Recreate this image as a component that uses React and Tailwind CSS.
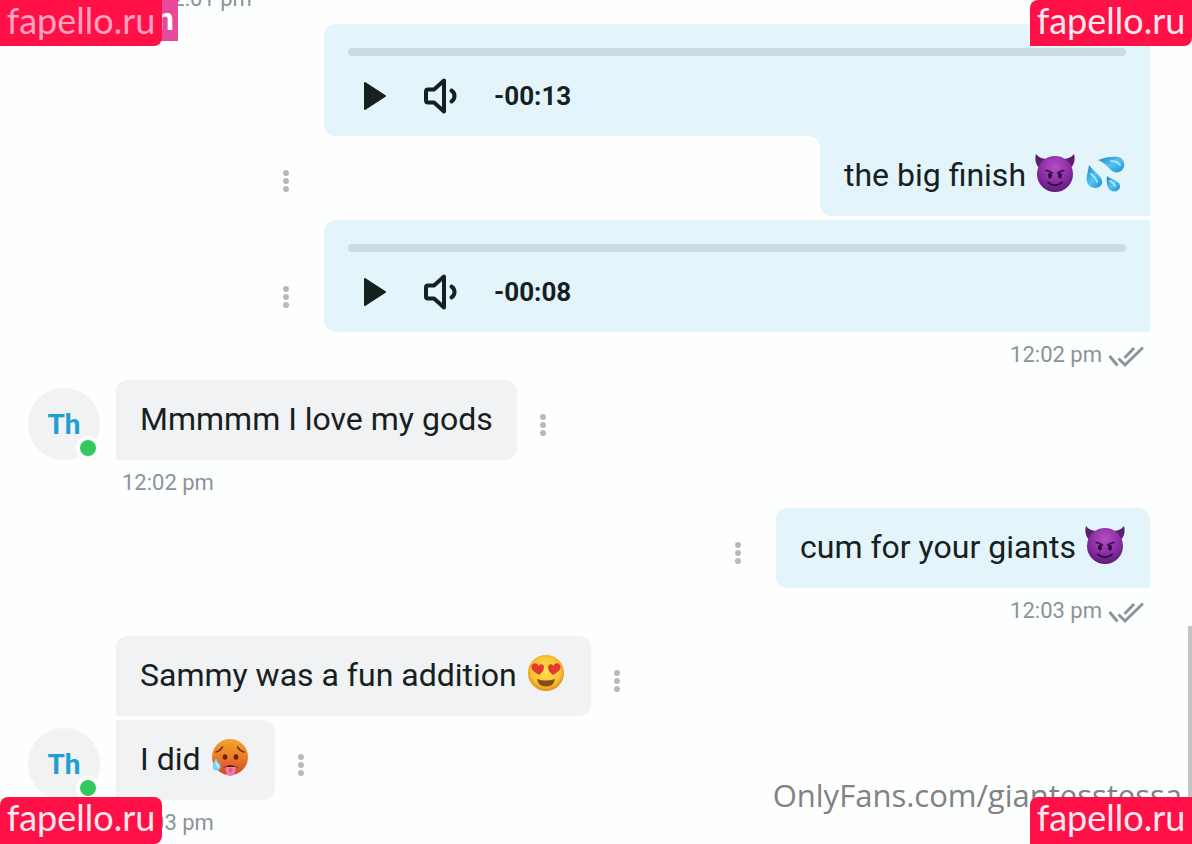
import { useId } from 'react';
import clsx from 'clsx';

function Devil() {
    const id = useId();
    return (
        <svg viewBox="0 0 42 42" className="w-[42px] h-[42px] shrink-0" role="img" aria-label="smiling face with horns">
            <defs>
                <radialGradient id={id} cx="50%" cy="30%" r="70%">
                    <stop offset="0" stopColor="#b44fc4" />
                    <stop offset="0.55" stopColor="#8d2fa6" />
                    <stop offset="1" stopColor="#5c1c7c" />
                </radialGradient>
            </defs>
            <path d="M2 2 C0 9 3 16 8 17 L15 7 C9 7 5 6 2 2 Z" fill="#5b2068" />
            <path d="M40 2 C42 9 39 16 34 17 L27 7 C33 7 37 6 40 2 Z" fill="#5b2068" />
            <circle cx="21" cy="22" r="18" fill={`url(#${id})`} />
            <path d="M12 18.500 Q15 18.500 18.500 21 M30 18.500 Q27 18.500 23.500 21" stroke="#32093f" strokeWidth="1.500" strokeLinecap="round" fill="none" />
            <ellipse cx="16" cy="23.500" rx="1.900" ry="3" fill="#32093f" />
            <ellipse cx="26" cy="23.500" rx="1.900" ry="3" fill="#32093f" />
            <path d="M14 30.500 Q21 36 28 30.500" stroke="#32093f" strokeWidth="1.800" strokeLinecap="round" fill="none" />
        </svg>
    );
}

function Droplets() {
    const id = useId();
    return (
        <svg viewBox="0 0 42 42" className="w-[42px] h-[42px] shrink-0" role="img" aria-label="sweat droplets">
            <defs>
                <linearGradient id={id} x1="0" y1="0" x2="1" y2="1">
                    <stop offset="0" stopColor="#1c83bd" />
                    <stop offset="0.5" stopColor="#52c3f2" />
                    <stop offset="1" stopColor="#1b8fd0" />
                </linearGradient>
            </defs>
            <path d="M14 8 C21 5 29 4 34 5 C39 6 41 10 40 15 C38 21 31 22 27 18 C23 14 19 10 14 8 Z" fill={`url(#${id})`} />
            <path d="M5 13 C4 20 2 25 3 30 C5 37 15 38 18 32 C20 25 10 20 5 13 Z" fill={`url(#${id})`} />
            <path d="M23 24 C22 29 23 34 25 37 C28 41 35 40 36 35 C37 29 28 28 23 24 Z" fill={`url(#${id})`} />
            <path d="M27 9 Q33 9 36 13 M7 22 Q12 26 13 30 M26 29 Q30 31 31 34" stroke="#a4e2fa" strokeWidth="2" strokeLinecap="round" fill="none" />
        </svg>
    );
}

function HeartEyes() {
    const id = useId();
    return (
        <svg viewBox="0 0 42 42" className="w-[42px] h-[42px] shrink-0" role="img" aria-label="smiling face with heart eyes">
            <defs>
                <radialGradient id={id} cx="50%" cy="45%" r="55%">
                    <stop offset="0" stopColor="#ffe04f" />
                    <stop offset="0.7" stopColor="#fcc533" />
                    <stop offset="1" stopColor="#dc8f1c" />
                </radialGradient>
            </defs>
            <circle cx="21" cy="21" r="18" fill={`url(#${id})`} />
            <path d="M14 23 C9 20 5 17 7 13 C9 10 13 11 13.500 14 C15 11 19 12 19 15 C19 18 17 21 14 23 Z" fill="#e33a2f" />
            <path d="M28 23 C33 20 37 17 35 13 C33 10 29 11 28.500 14 C27 11 23 12 23 15 C23 18 25 21 28 23 Z" fill="#e33a2f" />
            <path d="M12 27 Q21 30 30 27 Q29 34.500 21 34.500 Q13 34.500 12 27 Z" fill="#8a4a14" />
        </svg>
    );
}

function HotFace() {
    const id = useId();
    return (
        <svg viewBox="0 0 42 42" className="w-[42px] h-[42px] shrink-0" role="img" aria-label="hot face">
            <defs>
                <linearGradient id={id} x1="0" y1="0" x2="0" y2="1">
                    <stop offset="0" stopColor="#f5a52b" />
                    <stop offset="0.55" stopColor="#ea7625" />
                    <stop offset="1" stopColor="#cf4424" />
                </linearGradient>
            </defs>
            <circle cx="21" cy="21" r="18" fill={`url(#${id})`} />
            <path d="M7 16 Q11 15 13.500 11 M35 16 Q31 15 28.500 11" stroke="#7a300d" strokeWidth="1.500" strokeLinecap="round" fill="none" />
            <ellipse cx="16" cy="21" rx="2.300" ry="2.800" fill="#65210d" />
            <ellipse cx="27" cy="21" rx="2.300" ry="2.800" fill="#65210d" />
            <path d="M14 32 Q21 26 29 32 Z" fill="#65210d" />
            <path d="M16 31 H27 L26 36 Q25 40 21.500 40 Q18 40 17 36 Z" fill="#ee7ba6" />
            <path d="M21.500 32 V36" stroke="#cb4a7c" strokeWidth="1.500" />
            <path d="M7 22 C5 27 3 29 4 32 C5 36 11 35 12 31 C12 28 8 26 7 22 Z" fill="#7fd0f5" />
            <path d="M7 27 Q9 29 9 31" stroke="#e0f6ff" strokeWidth="1.500" strokeLinecap="round" fill="none" />
        </svg>
    );
}

function PlayIcon() {
    return (
        <svg viewBox="0 0 24 28" className="w-6 h-7" aria-hidden="true">
            <path d="M1 1 L21 14 L1 27 Z" fill="#16201f" stroke="#16201f" strokeWidth="2" strokeLinejoin="round" />
        </svg>
    );
}

function VolumeIcon() {
    return (
        <svg viewBox="0 0 34 36" className="w-[34px] h-9" fill="none" stroke="#16201f" strokeWidth="4" strokeLinejoin="round" strokeLinecap="round" aria-hidden="true">
            <path d="M10 11.500 L20 2.500 V33.500 L10 24.500 H4 Q2 24.500 2 22.500 V13.500 Q2 11.500 4 11.500 Z" />
            <path d="M27.500 12.500 Q30.500 14.500 30.500 18 T27.500 23.500" />
        </svg>
    );
}

function ReadIcon() {
    return (
        <svg viewBox="0 0 36 22" className="w-9 h-[22px]" fill="none" stroke="#8a9499" strokeWidth="3" aria-hidden="true">
            <path d="M1.500 10 L9.500 19.500 M10.500 12.500 L17 19 L35 1.500 M16.500 12 L26 2" />
        </svg>
    );
}

function MenuButton() {
    return (
        <button type="button" aria-label="Message options" className="flex h-[70px] w-5 shrink-0 flex-col items-center justify-center gap-0.5">
            <span className="size-1.5 rounded-full bg-[#b8b9ba]" />
            <span className="size-1.5 rounded-full bg-[#b8b9ba]" />
            <span className="size-1.5 rounded-full bg-[#b8b9ba]" />
        </button>
    );
}

function Bubble({ className, children }) {
    return (
        <div className={clsx('flex h-20 items-start gap-2 px-6 pt-4 text-[32px] leading-[46px] whitespace-nowrap text-[#16201f]', className)}>
            {children}
        </div>
    );
}

function AudioMessage({ time, className, menu }) {
    return (
        <div className="flex items-end gap-7 pl-[276px]">
            {menu ? <MenuButton /> : <div className="w-5 shrink-0" />}
            <div className={clsx('flex-1 bg-[#e3f4fb] px-6 pt-6', className)}>
                <input
                    type="range"
                    defaultValue="0"
                    aria-label="Seek"
                    className="block h-2 w-full appearance-none rounded-full bg-[#cbdbe4] [&::-webkit-slider-thumb]:size-0 [&::-webkit-slider-thumb]:appearance-none"
                />
                <div className="flex h-20 items-center pl-4">
                    <button type="button" aria-label="Play" className="mr-9"><PlayIcon /></button>
                    <button type="button" aria-label="Volume" className="mr-9"><VolumeIcon /></button>
                    <span className="text-[26px] font-bold text-[#16201f]">{time}</span>
                </div>
            </div>
        </div>
    );
}

function SentTime({ children }) {
    return (
        <div className="flex h-12 items-start justify-end gap-1.5 pt-2 pr-1.5 text-[22px] leading-[30px] text-[#8a9499]">
            <time>{children}</time>
            <span className="pt-1.5"><ReadIcon /></span>
        </div>
    );
}

function ReceivedTime({ className, children }) {
    return (
        <div className={clsx('h-12 pt-2 text-[22px] leading-[30px] text-[#8a9499]', className)}>
            <time>{children}</time>
        </div>
    );
}

function Avatar() {
    return (
        <div className="relative flex size-[72px] shrink-0 items-center justify-center rounded-full bg-[#f0f2f3] pt-0.5 text-[28px] font-bold text-[#209fd0]">
            Th
            <span className="absolute right-0 bottom-0 size-6 rounded-full border-4 border-[#fdfefe] bg-[#35c75f]" />
        </div>
    );
}

function Tag({ className, children }) {
    return (
        <div className={clsx("absolute z-10 flex w-[162px] items-center justify-center bg-[#ff1047] font-['Lato',sans-serif] text-[36px] leading-10", className)}>
            {children}
        </div>
    );
}

export default function App() {
    return (
        <div className="relative h-screen overflow-hidden bg-[#fdfefe] font-['Roboto',sans-serif]">
            <main className="-mt-6 pr-[42px] pl-7">
                <ReceivedTime className="pl-[132px]">12:01 pm</ReceivedTime>

                <section className="-ml-7">
                    <AudioMessage time="-00:13" className="rounded-l-xl rounded-tr-xl" />
                    <div className="mb-1 flex items-end gap-7 pl-[276px]">
                        <MenuButton />
                        <div className="flex flex-1 bg-[#e3f4fb]">
                            <div className="flex-1 rounded-tr-xl bg-[#fdfefe]" />
                            <div className="bg-linear-to-b from-[#e3f4fb] from-50% to-[#fdfefe] to-50%">
                                <Bubble className="rounded-bl-xl bg-[#e3f4fb]">
                                    the big finish <Devil /> <Droplets />
                                </Bubble>
                            </div>
                        </div>
                    </div>
                    <AudioMessage time="-00:08" className="rounded-l-xl" menu />
                    <SentTime>12:02 pm</SentTime>
                </section>

                <section>
                    <div className="flex items-end gap-4">
                        <Avatar />
                        <Bubble className="rounded-t-xl rounded-br-xl bg-[#f0f2f3]">Mmmmm I love my gods</Bubble>
                        <MenuButton />
                    </div>
                    <ReceivedTime className="pl-[94px]">12:02 pm</ReceivedTime>
                </section>

                <section>
                    <div className="flex items-end justify-end gap-7">
                        <MenuButton />
                        <Bubble className="rounded-t-xl rounded-bl-xl bg-[#e3f4fb]">
                            cum for your giants <Devil />
                        </Bubble>
                    </div>
                    <SentTime>12:03 pm</SentTime>
                </section>

                <section>
                    <div className="mb-1 flex items-end gap-4 pl-[88px]">
                        <Bubble className="rounded-t-xl rounded-br-xl bg-[#f0f2f3]">
                            Sammy was a fun addition <HeartEyes />
                        </Bubble>
                        <MenuButton />
                    </div>
                    <div className="flex items-end gap-4">
                        <Avatar />
                        <Bubble className="rounded-r-xl bg-[#f0f2f3]">
                            I did <HotFace />
                        </Bubble>
                        <MenuButton />
                    </div>
                    <ReceivedTime className="pl-[94px]">12:03 pm</ReceivedTime>
                </section>
            </main>

            <div className="absolute top-0 left-0 flex h-[41px] w-[178px] items-center justify-end bg-[#e84a9b] pr-1 pb-1 text-[32px] font-bold text-white">n</div>
            <div className="absolute right-0 bottom-[46px] h-[172px] w-1 bg-[#c3c4c5]" />
            <p className="absolute right-[10px] bottom-[29px] font-['Open_Sans',sans-serif] text-[31px] leading-10 text-[#808283]">OnlyFans.com/giantesstessa</p>

            <Tag className="top-0 left-0 h-[46px] rounded-br-lg pb-1.5 text-[#ffa3c0]">fapello.ru</Tag>
            <Tag className="top-0 right-0 h-[46px] rounded-tl-lg rounded-br-lg pb-1.5 text-[#ffe9ef]">fapello.ru</Tag>
            <Tag className="bottom-0 left-0 h-[47px] rounded-t-lg rounded-br-lg pb-2 text-[#ffe9ef]">fapello.ru</Tag>
            <Tag className="right-0 bottom-0 h-[47px] rounded-tl-lg pb-2 text-[#ffe9ef]">fapello.ru</Tag>
        </div>
    );
}
